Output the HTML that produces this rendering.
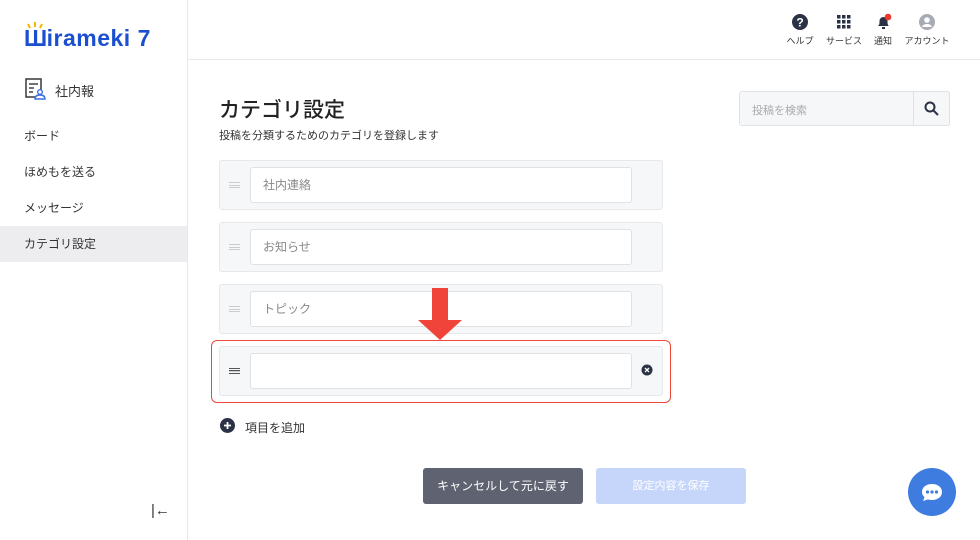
<!DOCTYPE html>
<html><head><meta charset="utf-8"><style>
*{box-sizing:border-box;margin:0;padding:0}
body{width:980px;height:540px;overflow:hidden;background:#fff;font-family:"Liberation Sans","Noto Sans CJK JP",sans-serif;color:#333;position:relative}
.abs{position:absolute}
.side{left:0;top:0;width:188px;height:540px;border-right:1px solid #e6e7ea}
.nav{left:0;width:187px;height:36px;font-size:12px;padding-left:24px;line-height:36px;color:#333}
.row{left:219px;width:444px;height:50px;background:#f6f7f9;border:1px solid #e7e8ec;border-radius:3px}
.inp{left:30px;top:6px;width:382px;height:36px;background:#fff;border:1px solid #dfe1e5;border-radius:3px;font-size:12px;color:#888;padding-left:12px;line-height:34px}
.grip{left:9px;top:21px;width:11px;height:6px;border-top:1px solid #ccc;border-bottom:1px solid #ccc}
.grip:after{content:"";position:absolute;left:0;top:2px;width:11px;height:1px;background:#ccc}
.hi{font-size:9px;color:#333;text-align:center}
</style></head><body>
<div class="abs side"></div>
<div class="abs" style="left:188px;top:59px;width:792px;height:1px;background:#e6e7ea"></div>
<div class="abs" style="left:24px;top:25px;font-size:23px;font-weight:bold;color:#1a4fd0;letter-spacing:0.5px">Ш<span style="margin-left:-1px">irameki 7</span></div>
<svg class="abs" style="left:27px;top:21px" width="16" height="8"><path d="M3 7L1 3M8 6V1M13 7L15 3" stroke="#f5b800" stroke-width="2"/></svg>
<svg class="abs" style="left:25px;top:78px" width="22" height="22" viewBox="0 0 22 22" fill="none"><rect x="1" y="1" width="15" height="18" stroke="#444" stroke-width="1.6"/><path d="M4 6h9M4 10h5M4 14h4" stroke="#444" stroke-width="1.4"/><circle cx="15" cy="14" r="2.3" stroke="#3b6fe0" stroke-width="1.4" fill="#fff"/><path d="M10 21c0-3 2-4 5-4s5 1 5 4z" stroke="#3b6fe0" stroke-width="1.4" fill="#fff"/></svg>
<div class="abs" style="left:55px;top:81px;font-size:13px">社内報</div>
<div class="abs nav" style="top:118px">ボード</div>
<div class="abs nav" style="top:154px">ほめもを送る</div>
<div class="abs nav" style="top:190px">メッセージ</div>
<div class="abs nav" style="top:226px;background:#ededef">カテゴリ設定</div>
<div class="abs" style="left:151px;top:502px;font-size:15px;color:#333">|←</div>
<svg class="abs" style="left:792px;top:14px" width="16" height="16"><circle cx="8" cy="8" r="8" fill="#2b3245"/><text x="8" y="12.5" font-size="12" font-weight="bold" fill="#fff" text-anchor="middle" font-family="Liberation Sans">?</text></svg>
<svg class="abs" style="left:837px;top:15px" width="14" height="14" fill="#2b3245"><rect x="0" y="0" width="3.5" height="3.5"/><rect x="5" y="0" width="3.5" height="3.5"/><rect x="10" y="0" width="3.5" height="3.5"/><rect x="0" y="5" width="3.5" height="3.5"/><rect x="5" y="5" width="3.5" height="3.5"/><rect x="10" y="5" width="3.5" height="3.5"/><rect x="0" y="10" width="3.5" height="3.5"/><rect x="5" y="10" width="3.5" height="3.5"/><rect x="10" y="10" width="3.5" height="3.5"/></svg>
<svg class="abs" style="left:875px;top:13px" width="18" height="18"><path d="M3 13c1.5-1 1.5-3 1.5-5a4 4 0 0 1 8 0c0 2 0 4 1.5 5z" fill="#2b3245"/><rect x="7" y="14" width="3" height="2" fill="#2b3245"/><circle cx="13" cy="4" r="3.3" fill="#f0382a"/></svg>
<svg class="abs" style="left:919px;top:14px" width="16" height="16"><circle cx="8" cy="8" r="8" fill="#a8abb5"/><circle cx="8" cy="6" r="2.8" fill="#fff"/><path d="M3 13c1-2.5 3-3 5-3s4 .5 5 3" fill="#fff"/></svg>
<div class="abs hi" style="left:785px;top:34px;width:30px">ヘルプ</div>
<div class="abs hi" style="left:824px;top:34px;width:40px">サービス</div>
<div class="abs hi" style="left:870px;top:34px;width:26px">通知</div>
<div class="abs hi" style="left:902px;top:34px;width:50px">アカウント</div>
<div class="abs" style="left:219px;top:94px;font-size:21px;color:#222;font-weight:500">カテゴリ設定</div>
<div class="abs" style="left:219px;top:127px;font-size:11px;color:#333">投稿を分類するためのカテゴリを登録します</div>
<div class="abs" style="left:739px;top:91px;width:211px;height:35px;border:1px solid #dfe1e5;background:#f6f7f9;border-radius:3px"></div>
<div class="abs" style="left:913px;top:91px;width:37px;height:35px;border:1px solid #dfe1e5;background:#f6f7f9;border-radius:0 3px 3px 0"></div>
<div class="abs" style="left:752px;top:102px;font-size:11px;color:#aaa">投稿を検索</div>
<svg class="abs" style="left:924px;top:101px" width="15" height="15" fill="none" stroke="#2b3245" stroke-width="2"><circle cx="6" cy="6" r="4.5"/><path d="M9.5 9.5L14 14"/></svg>
<div class="abs row" style="top:160px"><div class="abs grip"></div><div class="abs inp">社内連絡</div></div>
<div class="abs row" style="top:222px"><div class="abs grip"></div><div class="abs inp">お知らせ</div></div>
<div class="abs row" style="top:284px"><div class="abs grip"></div><div class="abs inp">トピック</div></div>
<div class="abs" style="left:211px;top:340px;width:460px;height:63px;border:1px solid #f0463a;border-radius:6px"></div>
<div class="abs row" style="top:346px"><div class="abs grip" style="border-color:#555"></div><div class="abs" style="left:9px;top:23px;width:11px;height:1px;background:#555"></div><div class="abs inp"></div>
<svg class="abs" style="left:421px;top:17px" width="12" height="12"><circle cx="6" cy="6" r="5.5" fill="#2b3245"/><path d="M4 4l4 4M8 4l-4 4" stroke="#fff" stroke-width="1.3"/></svg></div>
<svg class="abs" style="left:418px;top:288px" width="44" height="53"><rect x="14" y="0" width="16" height="33" fill="#f0443a"/><path d="M0 32h44L22 52z" fill="#f0443a"/></svg>
<svg class="abs" style="left:220px;top:418px" width="15" height="15"><circle cx="7.5" cy="7.5" r="7.5" fill="#2b3245"/><path d="M7.5 4v7M4 7.5h7" stroke="#fff" stroke-width="1.8"/></svg>
<div class="abs" style="left:245px;top:419px;font-size:12px;color:#333">項目を追加</div>
<div class="abs" style="left:423px;top:468px;width:160px;height:36px;background:#5f6270;border-radius:3px;color:#fff;font-size:12px;text-align:center;line-height:36px">キャンセルして元に戻す</div>
<div class="abs" style="left:596px;top:468px;width:150px;height:36px;background:#c6d6fb;border-radius:3px;color:#fff;font-size:11px;text-align:center;line-height:36px">設定内容を保存</div>
<svg class="abs" style="left:908px;top:468px" width="48" height="48"><circle cx="24" cy="24" r="24" fill="#3e7ce0"/><path d="M14 24c0-5 4.5-8 10-8s10 3 10 8-4.5 8-10 8c-1.5 0-3-.2-4-.6L15 33l1.5-3.8C15 27.8 14 26 14 24z" fill="#fff"/><circle cx="19.5" cy="24" r="1.6" fill="#3e7ce0"/><circle cx="24" cy="24" r="1.6" fill="#3e7ce0"/><circle cx="28.5" cy="24" r="1.6" fill="#3e7ce0"/></svg>
</body></html>
